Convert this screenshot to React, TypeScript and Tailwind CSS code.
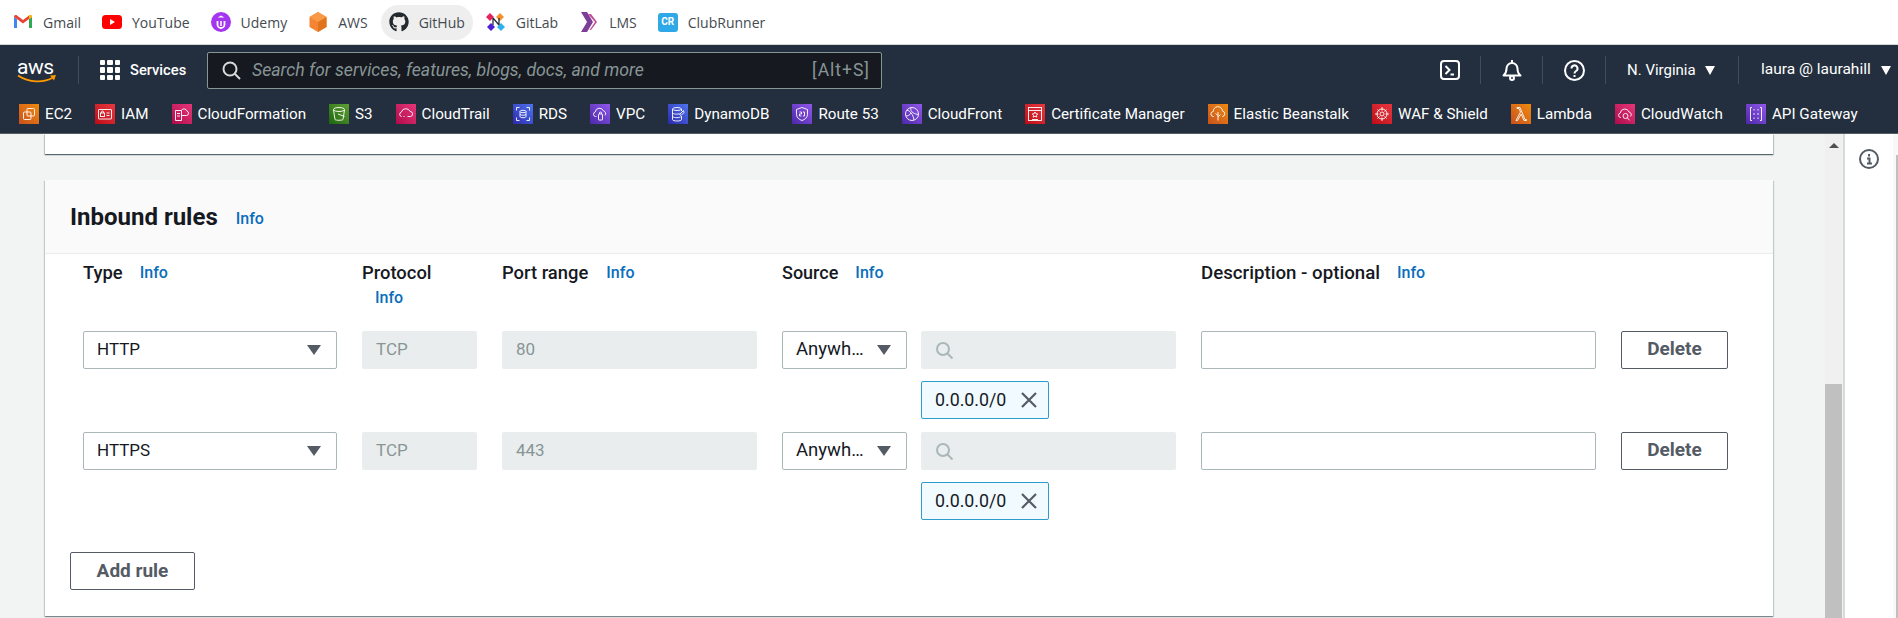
import React from 'react';
import { FaGithub } from 'react-icons/fa';

const ember = '[font-family:Roboto,sans-serif]';

const GRADS: Record<string, string> = {
  orange: 'bg-linear-to-tr from-[#c8511b] to-[#f08a0c]',
  red: 'bg-linear-to-tr from-[#bd0816] to-[#e8363f]',
  pink: 'bg-linear-to-tr from-[#b0084d] to-[#e6357a]',
  green: 'bg-linear-to-tr from-[#1b660f] to-[#5f9f32]',
  blue: 'bg-linear-to-tr from-[#2e27ad] to-[#4f74ef]',
  purple: 'bg-linear-to-tr from-[#4d27a8] to-[#9258ec]',
};

// little service glyphs, all on a 20x20 box
const GLYPHS: Record<string, React.ReactNode> = {
  EC2: (<><rect x="8" y="4.5" width="7.5" height="7.5" rx="1" /><rect x="4.5" y="8" width="7.5" height="7.5" rx="1" /></>),
  IAM: (<><rect x="3.5" y="5.5" width="13" height="9.5" rx="0.5" /><rect x="5.5" y="9" width="4" height="3.5" /><path d="M6.5 9V8a1 1 0 0 1 2 0v1M11.5 9h3M11.5 11.5h3" /></>),
  CloudFormation: (<><path d="M3.5 6.5h6v10h-6zM5 9.5h3M5 12h3" /><path d="M9.5 11.5h5a2.2 2.2 0 0 0 .5-4.3A3.2 3.2 0 0 0 9.5 6" /></>),
  S3: (<><path d="M4.5 6l1.5 9.5c.5 1 7.500 1 8 0L15.500 6" /><ellipse cx="10" cy="5.500" rx="5.500" ry="2" /><path d="M9 10l6.500 2.500" /></>),
  CloudTrail: (<><path d="M5.500 12.500a2.200 2.200 0 0 1-.2-4.300 4.700 4.700 0 0 1 8.800-.8 2.600 2.600 0 0 1 .6 5.100h-3.200M8.500 12.500h-1" /></>),
  RDS: (<><path d="M3.500 6.500v-3h3M16.500 6.500v-3h-3M3.500 13.500v3h3M16.500 13.500v3h-3" /><ellipse cx="10" cy="7.500" rx="3" ry="1.200" /><path d="M7 7.500v5c0 1.600 6 1.600 6 0v-5M7 10c0 1.600 6 1.600 6 0" /></>),
  VPC: (<><path d="M6.500 12.500h-1a2.300 2.300 0 0 1-.3-4.500 4.300 4.300 0 0 1 8.300-1 2.700 2.700 0 0 1 1.500 4.400" /><rect x="8.500" y="10" width="4" height="6" rx="0.500" /><path d="M9.500 10V9a1 1 0 0 1 2 0v1" /></>),
  DynamoDB: (<><ellipse cx="9" cy="5" rx="4.500" ry="1.500" /><path d="M4.500 5v10.500c0 2 9 2 9 0V12M4.500 8.500c0 2 6 2 7 1M4.500 12c0 2 6 2 8 1M13.500 5v2M11.500 10.500l4-4 .5 2-3 3z" /></>),
  'Route 53': (<><path d="M10 3.500l5.500 2v5c0 3-2.500 5-5.500 6-3-1-5.500-3-5.500-6v-5z" /><path d="M7.500 8h2v2h-2v2h2M11 8h1.500v4H11" /></>),
  CloudFront: (<><circle cx="10" cy="10" r="6.500" /><path d="M5 6c3 1 6 4 7 10M9 3.500c-1 3 1 6 7 7M4 12c2 0 4-1 5-3" /></>),
  'Certificate Manager': (<><rect x="3.500" y="3.500" width="13" height="13" /><path d="M3.500 6.500h13" /><path d="M10 8l1 1.800 1.800.2-1.300 1.300.3 1.800-1.800-.9-1.800.9.3-1.800-1.300-1.300 1.800-.2zM7 15.500h6" /></>),
  'Elastic Beanstalk': (<><path d="M6 12.500H5.500a2.500 2.500 0 0 1-.2-5 4.600 4.600 0 0 1 9.200-.500 2.800 2.800 0 0 1 0 5.500H14" /><path d="M10 16.500V8M10 11.500l-2.500-2M10 13l2.500-2.500" /></>),
  'WAF & Shield': (<><circle cx="10" cy="10" r="5" /><circle cx="10" cy="10" r="2" /><path d="M10 3v3.500M10 13.500V17M3 10h3.500M13.500 10H17M5.500 5.500l2 2M14.500 14.500l-2-2M14.500 5.500l-2 2M5.500 14.500l2-2" /></>),
  Lambda: (<path d="M5 16.500L9.500 8 8 4.500H6v-1h3l5 12h1.500v1H13L10.200 10 6.500 16.500z" />),
  CloudWatch: (<><path d="M6 13.500h-.5a2.300 2.300 0 0 1-.2-4.500 4.500 4.500 0 0 1 8.700-1 2.700 2.700 0 0 1 1.500 4.500" /><circle cx="10.500" cy="12" r="2.500" /><path d="M12.300 13.800l2.200 2.500" /></>),
  'API Gateway': (<><path d="M6 3.500H4.500v13H6M14 3.500h1.500v13H14" /><path d="M8 5v1.500M8 9v2M8 13.500V15M12 5v1.500M12 9v2M12 13.500V15" /></>),
};

const SHORTCUTS = [
  { name: 'EC2', c: 'orange' },
  { name: 'IAM', c: 'red' },
  { name: 'CloudFormation', c: 'pink' },
  { name: 'S3', c: 'green' },
  { name: 'CloudTrail', c: 'pink' },
  { name: 'RDS', c: 'blue' },
  { name: 'VPC', c: 'purple' },
  { name: 'DynamoDB', c: 'blue' },
  { name: 'Route 53', c: 'purple' },
  { name: 'CloudFront', c: 'purple' },
  { name: 'Certificate Manager', c: 'red' },
  { name: 'Elastic Beanstalk', c: 'orange' },
  { name: 'WAF & Shield', c: 'red' },
  { name: 'Lambda', c: 'orange' },
  { name: 'CloudWatch', c: 'pink' },
  { name: 'API Gateway', c: 'purple' },
];

function Bookmark({ label, icon, active }: { label: string; icon: React.ReactNode; active?: boolean }) {
  return (
    <div className={`flex h-[35px] items-center gap-[10px] rounded-full px-[8px] ${active ? 'bg-[#eeeeee]' : ''}`}>
      <div className="flex h-[20px] w-[20px] items-center justify-center">{icon}</div>
      <span className="whitespace-nowrap [font-family:'Open_Sans',sans-serif] text-[14px] text-[#444a50]">{label}</span>
    </div>
  );
}

function BookmarksBar() {
  return (
    <div className="flex h-[45px] items-center gap-[5px] border-b border-[#d6d6d6] bg-white px-[5px]">
      <Bookmark
        label="Gmail"
        icon={
          <svg width="20" height="16" viewBox="0 0 20 16">
            <path d="M1 14V3l3 2v9z" fill="#4285f4" />
            <path d="M19 14V3l-3 2v9z" fill="#34a853" />
            <path d="M4 5L1 3c0-2 2-2.500 3-1.500L10 6l6-4.500c1-1 3-.5 3 1.500l-3 2-6 4.500z" fill="#ea4335" />
            <path d="M16 5l3-2c0-2-2-2.500-3-1.500z" fill="#fbbc04" />
          </svg>
        }
      />
      <Bookmark
        label="YouTube"
        icon={
          <svg width="20" height="14" viewBox="0 0 20 14">
            <rect width="20" height="14" rx="3.500" fill="#f00" />
            <path d="M8 4l5 3-5 3z" fill="#fff" />
          </svg>
        }
      />
      <Bookmark
        label="Udemy"
        icon={
          <svg width="20" height="20" viewBox="0 0 20 20">
            <circle cx="10" cy="10" r="10" fill="#a435f0" />
            <path d="M6.500 9v3.500a3.500 3.500 0 0 0 7 0V9" fill="none" stroke="#fff" strokeWidth="1.800" />
            <path d="M10 3.500l3.500 2H6.500z" fill="#fff" />
            <path d="M10 9v5" stroke="#fff" strokeWidth="1.500" />
          </svg>
        }
      />
      <Bookmark
        label="AWS"
        icon={
          <svg width="20" height="20" viewBox="0 0 20 20">
            <path d="M10 0l8.500 5v10L10 20 1.500 15V5z" fill="#f58534" />
            <path d="M10 10l8.500-5v10L10 20z" fill="#e0741c" />
            <path d="M10 0l8.500 5L10 10 1.500 5z" fill="#f89a45" />
          </svg>
        }
      />
      <Bookmark label="GitHub" active icon={<FaGithub size={20} color="#24292f" />} />
      <Bookmark
        label="GitLab"
        icon={
          <svg width="20" height="20" viewBox="0 0 20 20">
            <path d="M4 1l4 4-4 4-4-4z" fill="#e3245c" />
            <path d="M14 1l4 4-4 4-4-4z" fill="#f5922f" />
            <path d="M5 11l4 4-4 4-4-4z" fill="#4a1fd6" />
            <path d="M15 11l4 4-4 4-4-4z" fill="#2fb1ee" />
            <path d="M7 6v7M13 6v7M7 6l6 7" stroke="#26303c" strokeWidth="1.300" fill="none" />
          </svg>
        }
      />
      <Bookmark
        label="LMS"
        icon={
          <svg width="18" height="20" viewBox="0 0 18 20">
            <path d="M1 0h6l6 10-6 10H1l6-10z" fill="#7b3f98" />
            <path d="M8 2h3l6 8-6 8H9.500l5.500-8z" fill="#c04c9a" />
          </svg>
        }
      />
      <Bookmark
        label="ClubRunner"
        icon={
          <div className="flex h-[19px] w-[20px] items-center justify-center rounded-[3px] bg-[#2ea8e6] [font-family:Roboto,sans-serif] text-[10px] leading-none font-bold text-white">
            CR
          </div>
        }
      />
    </div>
  );
}

function TopNav() {
  return (
    <div className="flex h-[50px] items-center pl-[17px] text-white">
      <div className="relative h-[25px] w-[40px]">
        <div className={`${ember} text-[21px] leading-[18px] font-normal tracking-[-0.5px]`}>aws</div>
        <svg className="absolute bottom-0 left-0" width="40" height="9" viewBox="0 0 40 9">
          <path d="M1 1.500c11 7.500 26 7.500 35 2" fill="none" stroke="#f90" strokeWidth="1.800" />
          <path d="M33 1.500l6-.5-2 5.500z" fill="#f90" />
        </svg>
      </div>
      <div className="ml-[21px] h-[28px] w-px bg-[#414d5c]" />
      <div className="ml-[21px] grid h-[20px] w-[20px] grid-cols-3 gap-[2px]">
        {Array.from({ length: 9 }).map((_, i) => (
          <div key={i} className="rounded-[1px] bg-white" />
        ))}
      </div>
      <span className={`${ember} ml-[10px] w-[56px] text-[14.700px] font-medium whitespace-nowrap`}>Services</span>
      <div className="ml-[21px] flex h-[37px] w-[675px] items-center rounded-[2px] border border-[#879596] bg-[#16191f] pr-[11px] pl-[14px]">
        <svg width="19" height="19" viewBox="0 0 19 19" fill="none" stroke="#d5dbdb" strokeWidth="2">
          <circle cx="8" cy="8" r="6.500" />
          <path d="M12.500 12.500l5.500 5.500" />
        </svg>
        <span className={`${ember} ml-[11px] text-[17.700px] text-[#879596] italic`}>Search for services, features, blogs, docs, and more</span>
        <span className={`${ember} ml-auto text-[17.500px] tracking-[1px] text-[#879596]`}>[Alt+S]</span>
      </div>
      <div className="ml-auto flex h-[28px] items-center pr-[6px]">
        <div className="flex h-full w-[62px] items-center justify-center border-r border-[#414d5c]">
          <svg width="20" height="20" viewBox="0 0 20 20" fill="none" stroke="#fff" strokeWidth="2">
            <rect x="1" y="1" width="18" height="18" rx="3" />
            <path d="M5.500 6l4 4-4 4M10.500 14.500h3.500" />
          </svg>
        </div>
        <div className="flex h-full w-[62px] items-center justify-center border-r border-[#414d5c]">
          <svg width="20" height="21" viewBox="0 0 20 21" fill="none" stroke="#fff" strokeWidth="2">
            <path d="M1.500 15.500h17c-2-1.500-3-3-3-7a5.500 5.500 0 0 0-11 0c0 4-1 5.500-3 7z" strokeLinejoin="round" />
            <circle cx="10" cy="18" r="2" />
            <path d="M10 0v3" />
          </svg>
        </div>
        <div className="flex h-full w-[63px] items-center justify-center border-r border-[#414d5c]">
          <svg width="21" height="21" viewBox="0 0 21 21" fill="none" stroke="#fff" strokeWidth="2">
            <circle cx="10.500" cy="10.500" r="9.500" />
            <path d="M7.500 8.500a3 3 0 1 1 4.500 2.500c-1 .6-1.500 1-1.500 2.500" />
            <path d="M10.500 15v2" />
          </svg>
        </div>
        <div className={`${ember} flex h-full w-[133px] items-center border-r border-[#414d5c] pl-[21px] text-[15px]`}>
          <span className="w-[71px] whitespace-nowrap">N. Virginia</span>
          <span className="ml-[7px] h-0 w-0 border-x-[5.500px] border-t-[9px] border-x-transparent border-t-white" />
        </div>
        <div className={`${ember} flex h-full w-[153px] items-center pl-[22px] text-[15.500px]`}>
          <span className="w-[113px] whitespace-nowrap">laura @ laurahill</span>
          <span className="ml-[7px] h-0 w-0 border-x-[5.500px] border-t-[9px] border-x-transparent border-t-white" />
        </div>
      </div>
    </div>
  );
}

function ShortcutBar() {
  return (
    <div className="flex h-[39px] items-start gap-[23px] border-b border-[#545b64] pt-[9px] pl-[19px]">
      {SHORTCUTS.map((s) => (
        <div key={s.name} className="flex items-center gap-[6px]">
          <div className={`h-[20px] w-[20px] ${GRADS[s.c]}`}>
            <svg width="20" height="20" viewBox="0 0 20 20" fill="none" stroke="#fff" strokeWidth="0.9">
              {GLYPHS[s.name]}
            </svg>
          </div>
          <span className={`${ember} text-[15.200px] leading-[20px] whitespace-nowrap text-white`}>{s.name}</span>
        </div>
      ))}
    </div>
  );
}

function Info({ className = '' }: { className?: string }) {
  return <span className={`${ember} text-[16px] leading-[20px] font-medium text-[#0a6ebd] ${className}`}>Info</span>;
}

function Label({ text, size = 'text-[18.400px]' }: { text: string; size?: string }) {
  return <span className={`${ember} ${size} leading-[20px] font-medium whitespace-nowrap text-[#16191f]`}>{text}</span>;
}

function Caret() {
  return <span className="h-0 w-0 shrink-0 border-x-[7px] border-t-[10px] border-x-transparent border-t-[#545b64]" />;
}

function SelectBox({ value, className, size = 'text-[17px]' }: { value: string; className: string; size?: string }) {
  return (
    <div className={`flex h-[38px] items-center justify-between rounded-[2px] border border-[#aab7b8] bg-white pr-[15px] pl-[13px] ${className}`}>
      <span className={`${ember} ${size} whitespace-nowrap text-[#16191f]`}>{value}</span>
      <Caret />
    </div>
  );
}

function Disabled({ value, className }: { value: string; className: string }) {
  return (
    <div className={`flex h-[38px] items-center rounded-[2px] bg-[#eaeded] pl-[14px] ${ember} text-[17px] text-[#879596] ${className}`}>
      {value}
    </div>
  );
}

function RuleRow({ type, port }: { type: string; port: string }) {
  return (
    <div className="flex items-start gap-[25px]">
      <SelectBox value={type} className="w-[254px]" />
      <Disabled value="TCP" className="w-[115px]" />
      <Disabled value={port} className="w-[255px]" />
      <div className="flex w-[394px] gap-[14px]">
        <SelectBox value="Anywh…" className="w-[125px] shrink-0" size="text-[18.500px]" />
        <div className="flex-1">
          <div className="flex h-[38px] items-center rounded-[2px] bg-[#eaeded] pl-[14px]">
            <svg width="19" height="19" viewBox="0 0 19 19" fill="none" stroke="#aab7b8" strokeWidth="2">
              <circle cx="8" cy="8" r="6" />
              <path d="M12 12l5.500 5.500" />
            </svg>
          </div>
          <div className="mt-[12px] flex h-[38px] w-[128px] items-center justify-between rounded-[2px] border border-[#2d9ccb] bg-[#f1faff] pr-[10px] pl-[13px]">
            <span className={`${ember} text-[17.800px] text-[#16191f]`}>0.0.0.0/0</span>
            <svg width="18" height="18" viewBox="0 0 18 18" stroke="#545b64" strokeWidth="2.200">
              <path d="M2 2l14 14M16 2L2 16" />
            </svg>
          </div>
        </div>
      </div>
      <div className="h-[38px] w-[395px] rounded-[2px] border border-[#aab7b8] bg-white" />
      <button className={`h-[38px] w-[107px] rounded-[2px] border border-[#545b64] bg-white pb-[2px] ${ember} text-[19px] font-bold text-[#545b64]`}>
        Delete
      </button>
    </div>
  );
}

function InboundCard() {
  return (
    <div className="mt-[26px] h-[436px] w-[1728px] bg-white shadow-[0_1px_1px_0_rgba(0,28,36,0.3),1px_1px_1px_0_rgba(0,28,36,0.15),-1px_1px_1px_0_rgba(0,28,36,0.15)]">
      <div className="flex h-[74px] items-center border-b border-[#eaeded] bg-[#fafafa] pl-[25px]">
        <h2 className={`${ember} text-[24px] font-bold text-[#16191f]`}>Inbound rules</h2>
        <Info className="ml-[18px] pt-[4px]" />
      </div>
      <div className="pl-[38px]">
        <div className="flex h-[77px] gap-[25px] pt-[9px]">
          <div className="flex w-[254px] items-start gap-[17px]">
            <Label text="Type" />
            <Info />
          </div>
          <div className="flex w-[115px] flex-col items-start">
            <Label text="Protocol" />
            <Info className="mt-[5px] ml-[13px]" />
          </div>
          <div className="flex w-[255px] items-start gap-[18px]">
            <Label text="Port range" />
            <Info />
          </div>
          <div className="flex w-[394px] items-start gap-[17px]">
            <Label text="Source" size="text-[18px]" />
            <Info />
          </div>
          <div className="flex items-start gap-[17px]">
            <Label text="Description - optional" size="text-[18.700px]" />
            <Info />
          </div>
        </div>
        <RuleRow type="HTTP" port="80" />
        <div className="mt-[13px]">
          <RuleRow type="HTTPS" port="443" />
        </div>
        <button className={`mt-[32px] -ml-[13px] h-[38px] w-[125px] rounded-[2px] border border-[#545b64] bg-white ${ember} text-[19px] font-bold text-[#545b64]`}>
          Add rule
        </button>
      </div>
    </div>
  );
}

export default function App() {
  return (
    <div className="flex h-[618px] w-[1898px] flex-col overflow-hidden bg-[#f2f3f3]">
      <BookmarksBar />
      <div className="bg-[#232f3e]">
        <TopNav />
        <ShortcutBar />
      </div>
      <div className="flex min-h-0 flex-1">
        <div className="w-[1825px] overflow-hidden pl-[45px]">
          <div className="h-[20px] w-[1728px] bg-white shadow-[0_1px_1px_0_rgba(0,28,36,0.5),1px_1px_1px_0_rgba(0,28,36,0.15),-1px_1px_1px_0_rgba(0,28,36,0.15)]" />
          <InboundCard />
        </div>
        {/* page scrollbar */}
        <div className="relative w-[18px] bg-[#f0f0f0]">
          <span className="absolute top-[9px] left-[4px] h-0 w-0 border-x-[5px] border-b-[5px] border-x-transparent border-b-[#505050]" />
          <div className="absolute top-[250px] bottom-0 left-0 w-[17px] bg-[#c0c0c0]" />
        </div>
        <div className="flex w-[50px] justify-center border-l-2 border-[#d5dbdb] bg-white pt-[15px]">
          <svg width="20" height="20" viewBox="0 0 20 20" fill="none">
            <circle cx="10" cy="10" r="9" stroke="#545b64" strokeWidth="2" />
            <path d="M10 5v2.500M8 9.500h2.500V14M8 14.500h5" stroke="#545b64" strokeWidth="2" />
          </svg>
        </div>
        <div className="flex w-[5px] bg-[#f8f8f8] pt-[21px]">
          <div className="ml-[3px] w-[2px] bg-[#c0c0c0]" />
        </div>
      </div>
    </div>
  );
}
